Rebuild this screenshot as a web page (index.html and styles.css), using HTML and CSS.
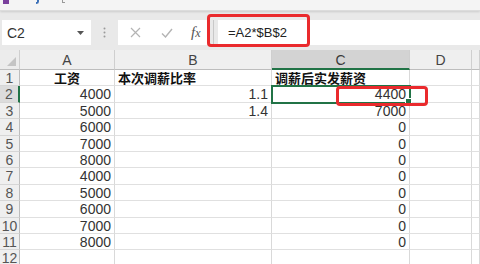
FILE: index.html
```html
<!DOCTYPE html>
<html lang="zh-CN">
<head>
<meta charset="utf-8">
<title>Excel</title>
<link rel="stylesheet" href="styles.css">
</head>
<body>
<div class="app">
  <div class="qat">
    <span class="q q1"></span>
    <span class="q q2"></span>
    <span class="q q3"></span>
  </div>
  <div class="fbar">
    <div class="namebox">
      <span class="ref">C2</span>
      <svg class="dd" width="7" height="4" viewBox="0 0 7 4"><path d="M0 0H7L3.5 4Z" fill="#555"/></svg>
    </div>
    <svg class="grip" width="3" height="11" viewBox="0 0 3 11"><circle cx="1.5" cy="1.5" r="1" fill="#999"/><circle cx="1.5" cy="5.5" r="1" fill="#999"/><circle cx="1.5" cy="9.5" r="1" fill="#999"/></svg>
    <div class="btns">
      <svg class="ico" width="11" height="11" viewBox="0 0 11 11"><path d="M1 1L10 10M10 1L1 10" stroke="#b4b4b4" stroke-width="1.2" fill="none"/></svg>
      <svg class="ico" width="12" height="10" viewBox="0 0 12 10"><path d="M1 5.5L4.5 9L11 1" stroke="#b4b4b4" stroke-width="1.4" fill="none"/></svg>
      <span class="fx">f<i>x</i></span>
    </div>
    <div class="sep"></div>
    <div class="formula">=A2*$B$2</div>
    <div class="mark mark-formula"></div>
  </div>
  <div class="sheet">
    <div class="hd corner"><span class="tri"></span></div>
    <div class="hd">A</div>
    <div class="hd">B</div>
    <div class="hd hd-sel">C</div>
    <div class="hd">D</div>
    <div class="hd"></div>

    <div class="rh">1</div><div class="c ctr b">工资</div><div class="c b">本次调薪比率</div><div class="c b">调薪后实发薪资</div><div class="c"></div><div class="c"></div>
    <div class="rh rh-sel">2</div><div class="c r">4000</div><div class="c r">1.1</div><div class="c r sel">4400</div><div class="c"></div><div class="c"></div>
    <div class="rh">3</div><div class="c r">5000</div><div class="c r">1.4</div><div class="c r">7000</div><div class="c"></div><div class="c"></div>
    <div class="rh">4</div><div class="c r">6000</div><div class="c"></div><div class="c r">0</div><div class="c"></div><div class="c"></div>
    <div class="rh">5</div><div class="c r">7000</div><div class="c"></div><div class="c r">0</div><div class="c"></div><div class="c"></div>
    <div class="rh">6</div><div class="c r">8000</div><div class="c"></div><div class="c r">0</div><div class="c"></div><div class="c"></div>
    <div class="rh">7</div><div class="c r">4000</div><div class="c"></div><div class="c r">0</div><div class="c"></div><div class="c"></div>
    <div class="rh">8</div><div class="c r">5000</div><div class="c"></div><div class="c r">0</div><div class="c"></div><div class="c"></div>
    <div class="rh">9</div><div class="c r">6000</div><div class="c"></div><div class="c r">0</div><div class="c"></div><div class="c"></div>
    <div class="rh">10</div><div class="c r">7000</div><div class="c"></div><div class="c r">0</div><div class="c"></div><div class="c"></div>
    <div class="rh">11</div><div class="c r">8000</div><div class="c"></div><div class="c r">0</div><div class="c"></div><div class="c"></div>
    <div class="rh">12</div><div class="c"></div><div class="c"></div><div class="c"></div><div class="c"></div><div class="c"></div>

    <div class="mark mark-cell"></div>
  </div>
</div>
</body>
</html>
```
FILE: styles.css
```css
* { box-sizing: border-box; }
html, body { margin: 0; padding: 0; background: #fff; }
.app {
  width: 480px;
  height: 264px;
  overflow: hidden;
  font-family: "Liberation Sans Narrow", "Liberation Sans", "Noto Sans CJK SC", sans-serif;
}
.qat {
  height: 11px;
  background: #f4f4f4;
  display: flex;
  align-items: flex-start;
  border-bottom: 1px solid #dcdcdc;
  box-shadow: 0 1px 2px rgba(0,0,0,0.12);
  position: relative;
  z-index: 1;
}
.q { display: block; height: 4px; }
.q1 { width: 6px; margin-left: 3px; background: #7a3f9c; }
.q2 { width: 3px; height: 4px; margin-left: 27px; border-right: 2px solid #3a6fb7; border-bottom: 2px solid #3a6fb7; border-radius: 0 0 3px 0; }
.q3 { width: 3px; height: 3px; margin-left: 23px; border-left: 1px solid #999; border-bottom: 1px solid #999; }

.fbar {
  height: 39px;
  background: #e9e9e9;
  display: flex;
  align-items: flex-start;
  padding-top: 9px;
  position: relative;
}
.namebox {
  width: 89px;
  height: 25px;
  margin-left: 2px;
  background: #fff;
  display: flex;
  align-items: center;
  padding-left: 5px;
  padding-right: 7px;
  justify-content: space-between;
}
.ref { font-size: 14px; color: #333; }
.grip { margin-left: 12px; margin-top: 7px; }
.btns {
  width: 89px;
  height: 25px;
  margin-left: 12px;
  background: #fff;
  display: flex;
  align-items: center;
  padding-left: 12px;
  gap: 20px;
}
.fx {
  font-family: "Liberation Serif", serif;
  font-style: italic;
  font-size: 15px;
  color: #555;
  margin-left: -2px;
}
.fx i { font-size: 12px; }
.sep {
  width: 1px;
  height: 25px;
  margin-left: 6px;
  background: #c8c8c8;
}
.formula {
  flex: 1;
  height: 25px;
  margin-left: 4px;
  background: #fff;
  font-family: "Liberation Sans", sans-serif;
  font-size: 13px;
  color: #222;
  line-height: 25px;
  padding-left: 10px;
}
.mark {
  position: absolute;
  border: 3px solid #ea2a2d;
  border-radius: 4px;
}
.mark-formula { left: 207px; top: 3px; width: 103px; height: 33px; }

.sheet {
  display: grid;
  grid-template-columns: 20px 95px 157px 138px 62px 8px;
  grid-template-rows: 20px repeat(12, 16.4px);
  position: relative;
  background: #fff;
}
.hd {
  background: #efefef;
  border-right: 1px solid #cfcfcf;
  border-bottom: 1px solid #bdbdbd;
  font-size: 14px;
  color: #444;
  text-align: center;
  line-height: 20px;
}
.corner { position: relative; background: #ececec; }
.tri {
  position: absolute;
  right: 3px;
  bottom: 3px;
  width: 0; height: 0;
  border-left: 9px solid transparent;
  border-bottom: 9px solid #c4c4c4;
}
.hd-sel {
  background: #d3d3d3;
  border-bottom: 2px solid #217346;
  color: #3a3a3a;
}
.rh {
  background: #efefef;
  border-right: 1px solid #bdbdbd;
  border-bottom: 1px solid #d6d6d6;
  font-size: 14px;
  color: #555;
  text-align: center;
  line-height: 16px;
}
.rh-sel {
  background: #dcdcdc;
  border-right: 2px solid #217346;
}
.c {
  border-right: 1px solid #d9d9d9;
  border-bottom: 1px solid #e0e0e0;
  font-size: 14px;
  color: #333;
  line-height: 16px;
  padding: 0 3px;
  white-space: nowrap;
  overflow: hidden;
}
.r { text-align: right; }
.ctr { text-align: center; }
.b {
  font-family: "Noto Sans CJK SC", sans-serif;
  font-weight: 700;
  font-size: 13px;
  color: #111;
  line-height: 16px;
  overflow: visible;
}
.sel {
  position: relative;
  overflow: visible;
  outline: 2px solid #217346;
  outline-offset: -1px;
}
.sel::after {
  content: "";
  position: absolute;
  right: -3px;
  bottom: -3px;
  width: 5px;
  height: 5px;
  background: #217346;
  border: 1px solid #fff;
}
.mark-cell { left: 336px; top: 36px; width: 92px; height: 20px; }
```
